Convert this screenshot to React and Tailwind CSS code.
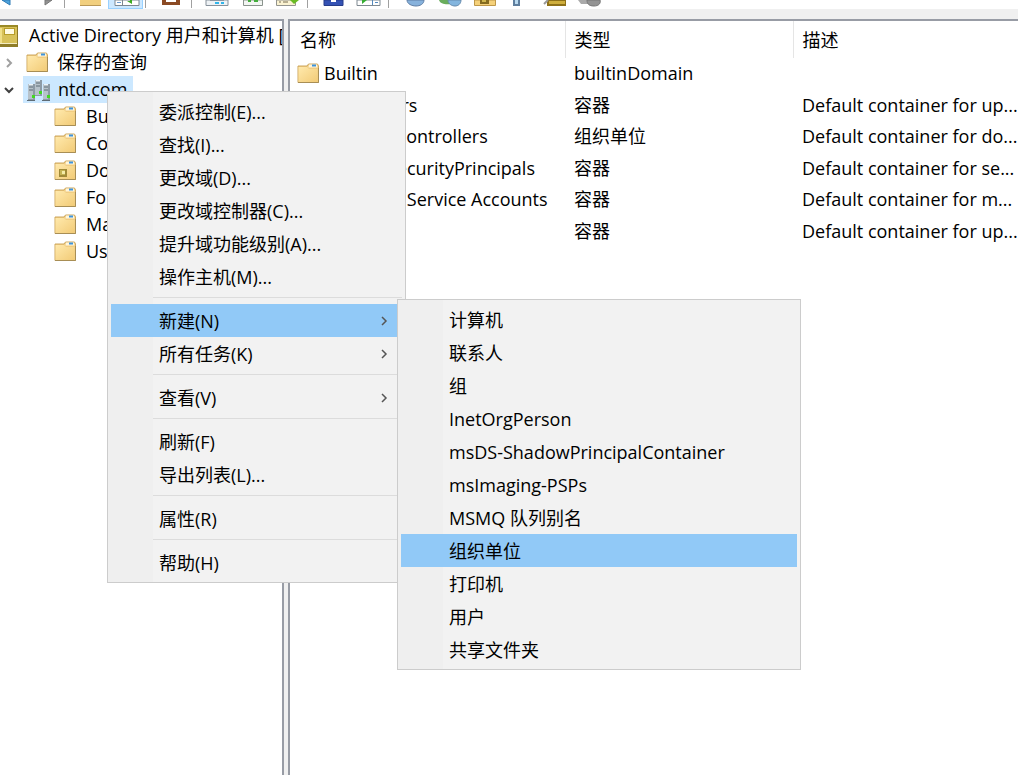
import clsx from 'clsx';

const TOOLBAR = [
  ['back', 'forward'],
  ['folder', 'tree'],
  ['clipboard'],
  ['properties', 'refresh', 'export'],
  ['help', 'console'],
  ['user', 'group', 'unit', 'filter', 'find', 'more'],
];

const CHILDREN = [
  { name: 'Builtin', type: 'builtinDomain', desc: '' },
  { name: 'Computers', type: '容器', desc: 'Default container for up...' },
  { name: 'Domain Controllers', type: '组织单位', desc: 'Default container for do...', unit: true },
  { name: 'ForeignSecurityPrincipals', type: '容器', desc: 'Default container for se...' },
  { name: 'Managed Service Accounts', type: '容器', desc: 'Default container for m...' },
  { name: 'Users', type: '容器', desc: 'Default container for up...' },
];

const NEW_ITEMS = [
  '计算机',
  '联系人',
  '组',
  'InetOrgPerson',
  'msDS-ShadowPrincipalContainer',
  'msImaging-PSPs',
  'MSMQ 队列别名',
  '组织单位',
  '打印机',
  '用户',
  '共享文件夹',
];

const MENU = [
  [
    { label: '委派控制(E)...' },
    { label: '查找(I)...' },
    { label: '更改域(D)...' },
    { label: '更改域控制器(C)...' },
    { label: '提升域功能级别(A)...' },
    { label: '操作主机(M)...' },
  ],
  [
    { label: '新建(N)', arrow: true, items: NEW_ITEMS },
    { label: '所有任务(K)', arrow: true },
  ],
  [{ label: '查看(V)', arrow: true }],
  [{ label: '刷新(F)' }, { label: '导出列表(L)...' }],
  [{ label: '属性(R)' }],
  [{ label: '帮助(H)' }],
];

function FolderIcon({ unit }) {
  return (
    <svg width="22" height="21" viewBox="0 0 22 21" className="shrink-0" aria-hidden="true">
      <defs>
        <linearGradient id="folder" x1="0" y1="0" x2="1" y2="1">
          <stop offset="0" stopColor="#ffe9ac" />
          <stop offset="1" stopColor="#f2cb77" />
        </linearGradient>
      </defs>
      <path d="M1 3h9l1.500-2h9l1 2v16.500H1z" fill="#f0cd83" stroke="#cda75e" />
      <path d="M12 1.500h8l.5 3h-9z" fill="#fff6dc" />
      <path d="M15 2.500h4" stroke="#3d93dc" strokeWidth="2" />
      <path d="M1.500 4H10l2 2h8.500v13h-19z" fill="url(#folder)" />
      <path d="M1 19.500h20.500V5" fill="none" stroke="#a88e55" />
      {unit && (
        <>
          <path d="M5 9h8v8H5z" fill="#a08a38" />
          <path d="M6 10h5v5H6z" fill="#c5b455" />
          <path d="M8 11h3v3H8z" fill="#f4eca8" />
        </>
      )}
    </svg>
  );
}

function BookIcon() {
  return (
    <svg width="19" height="24" viewBox="0 0 19 24" className="shrink-0" aria-hidden="true">
      <path d="M0 1h18v22H0z" fill="#d8c25a" />
      <path d="M0 1h18v2H0z" fill="#9a8926" />
      <path d="M0 20h18v3H0z" fill="#8f7d28" />
      <path d="M0 19h17v1H0z" fill="#f3ecc0" />
      <path d="M4 4h11v7H4z" fill="#b79d2a" />
      <path d="M5 5h9v5H5z" fill="#fffbe4" />
      <path d="M17 2h1v20h-1z" fill="#8c7826" />
      <path d="M0 4h2v15H0z" fill="#f0df86" />
    </svg>
  );
}

function Server({ x, y }) {
  return (
    <g transform={`translate(${x} ${y})`}>
      <path d="M0 0h7v16H0z" fill="#8d9aa5" />
      <path d="M0 0h5v15H0z" fill="#b7c2ca" />
      <path d="M1 3h4M1 6h4" stroke="#5c6a75" />
      <path d="M1 .5h4" stroke="#eef3f6" />
      <path d="M4 11h3v3H4z" fill="#43d822" />
    </g>
  );
}

function DomainIcon() {
  return (
    <svg width="24" height="24" viewBox="0 0 24 24" className="shrink-0" aria-hidden="true">
      <Server x={8} y={2} />
      <Server x={1} y={6} />
      <Server x={16} y={6} />
      <path d="M0 22.500h8M15 22.500h8" stroke="#5f6c75" />
    </svg>
  );
}

function Chevron({ className, width = 2 }) {
  return (
    <svg width="8" height="10" viewBox="0 0 8 10" className={className} aria-hidden="true">
      <path d="M2 1l4 4-4 4" fill="none" stroke="currentColor" strokeWidth={width} />
    </svg>
  );
}

function ToolIcon({ name }) {
  const art = {
    back: <path d="M10 0h8v5z" fill="#4ea3dc" stroke="#2d7ab5" />,
    forward: <path d="M18 0h7l-7 5z" fill="#929292" stroke="#777" />,
    folder: (
      <>
        <path d="M7 0h21v6H7z" fill="#f1cf7f" />
        <path d="M7 5.500h21" stroke="#b99857" />
      </>
    ),
    tree: (
      <>
        <path d="M6 0h24v5.500H6z" fill="#fff" stroke="#7d8791" />
        <path d="M13.500 0v5" stroke="#7d8791" />
        <path d="M8 2.500h4" stroke="#6c9bd0" />
        <path d="M18 1h3V0h2v4z" fill="#3cab22" />
      </>
    ),
    clipboard: (
      <>
        <path d="M8 0h18v5H8z" fill="#8b4a24" />
        <path d="M12 0h10v2H12z" fill="#fff" />
      </>
    ),
    properties: (
      <>
        <path d="M6 0h22v5.500H6z" fill="#eef2f5" stroke="#87919b" />
        <path d="M10 .5h14" stroke="#8c96a0" />
        <path d="M15 3h4M21 3h3" stroke="#31b6ec" strokeWidth="2" />
      </>
    ),
    refresh: (
      <>
        <path d="M8.500 0h19v5.500h-19z" fill="#f3f6f3" stroke="#8a938d" />
        <path d="M13 1h3M19 1h4" stroke="#43ad3b" strokeWidth="2" />
      </>
    ),
    export: (
      <>
        <path d="M6.500 0h19v5.500h-19z" fill="#fbf3d2" stroke="#93948e" />
        <path d="M9 2h2M13 2h5" stroke="#776c50" />
        <path d="M20 0h9l-5 4z" fill="#69bb23" />
      </>
    ),
    help: (
      <>
        <path d="M8 0h19v5.500H8z" fill="#3452b4" stroke="#263c8a" />
        <path d="M15 0h5v2h-5z" fill="#fff" />
      </>
    ),
    console: (
      <>
        <path d="M6 0h23v5.500H6z" fill="#fff" stroke="#7f8991" />
        <path d="M11 0h5l-5 4z" fill="#36ad32" />
        <path d="M21.500 0v5M24 2.500h3" stroke="#5489bd" />
      </>
    ),
    user: <path d="M10 0h17c0 4-4 6-8 6s-9-2-9-6z" fill="#87b2dc" stroke="#617fa5" />,
    group: (
      <>
        <path d="M7 0h12v4c-5 1-11 0-12-4z" fill="#69ad5c" />
        <path d="M16 0h13c0 4-3 6-6 6s-7-2-7-6z" fill="#83b5de" stroke="#668bad" />
      </>
    ),
    unit: (
      <>
        <path d="M7.500 0h21v5.500h-21z" fill="#f5d17a" stroke="#bf9849" />
        <path d="M13 0h9v4h-9z" fill="#866c20" />
        <path d="M15 0h4v2h-4z" fill="#d0b64f" />
      </>
    ),
    filter: (
      <>
        <path d="M11 0h7v6h-7z" fill="#5f7f9f" />
        <path d="M13 0h3v4h-3z" fill="#b9d9ef" />
      </>
    ),
    find: (
      <>
        <path d="M10 0h19v6H10z" fill="#8f7118" />
        <path d="M12 1h16v3H12z" fill="#cfae3c" />
        <path d="M7 4l4-4" stroke="#999" strokeWidth="2" />
      </>
    ),
    more: (
      <>
        <path d="M6 0h13v4H9z" fill="#aaa" />
        <path d="M15 0h13c1 3-1 6-6 6s-7-2-7-6z" fill="#949494" stroke="#777" />
      </>
    ),
  };
  return (
    <svg width="35" height="9" viewBox="0 0 35 9" aria-hidden="true">
      {art[name]}
    </svg>
  );
}

function Toolbar() {
  return (
    <div role="toolbar" className="-ml-2 flex h-[9px] bg-white">
      {TOOLBAR.map((group, i) => (
        <div key={group[0]} className="flex">
          {i > 0 && <div className="mr-2 ml-0.5 h-2 w-px bg-[#a0a0a0]" />}
          {group.map((name) => (
            <button
              key={name}
              aria-label={name}
              className={clsx('h-[9px] w-[35px]', name === 'tree' && 'border-x border-b border-[#99d1ff] bg-[#cce8ff]')}
            >
              <ToolIcon name={name} />
            </button>
          ))}
        </div>
      ))}
    </div>
  );
}

function Tree() {
  return (
    <nav className="w-[284px] shrink-0 overflow-hidden border-t-2 border-r-2 border-[#989ca5] bg-white pt-px whitespace-nowrap">
      <ul role="tree">
        <li role="treeitem" className="flex h-[27px] items-center gap-[10px]">
          <BookIcon />
          <span>Active Directory 用户和计算机 [</span>
        </li>
        <li role="treeitem" className="flex h-[27px] items-center">
          <Chevron className="ml-[5px] text-[#a0a0a0]" />
          <span className="ml-[13px] flex items-center gap-[9px]">
            <FolderIcon />
            保存的查询
          </span>
        </li>
        <li role="treeitem" aria-expanded="true">
          <div className="flex h-[27px] items-center">
            <Chevron className="ml-[5px] rotate-90 text-[#404040]" />
            <span className="ml-[10px] flex h-full items-center gap-[7px] bg-[#cce8ff] pr-[6px] pl-1">
              <DomainIcon />
              ntd.com
            </span>
          </div>
          <ul role="group">
            {CHILDREN.map((c) => (
              <li key={c.name} role="treeitem" className="flex h-[27px] items-center gap-[10px] pl-[54px]">
                <FolderIcon unit={c.unit} />
                <span>{c.name}</span>
              </li>
            ))}
          </ul>
        </li>
      </ul>
    </nav>
  );
}

function ObjectList() {
  return (
    <main className="min-w-0 flex-1 overflow-hidden border-t-2 border-l-2 border-[#989ca5] bg-white whitespace-nowrap">
      <table className="h-[226px] w-full table-fixed text-left">
        <thead>
          <tr className="h-[37px]">
            <th className="w-[275px] border-r border-[#e5e5e5] pt-0.5 pl-[10px] font-normal">名称</th>
            <th className="w-[228px] border-r border-[#e5e5e5] pt-0.5 pl-[9px] font-normal">类型</th>
            <th className="pt-0.5 pl-[9px] font-normal">描述</th>
          </tr>
        </thead>
        <tbody>
          {CHILDREN.map((c) => (
            <tr key={c.name}>
              <td className="pl-[7px]">
                <span className="flex items-center gap-[5px]">
                  <FolderIcon unit={c.unit} />
                  {c.name}
                </span>
              </td>
              <td className="pl-[9px]">{c.type}</td>
              <td className="pl-[9px]">{c.desc}</td>
            </tr>
          ))}
        </tbody>
      </table>
    </main>
  );
}

function MenuItem({ label, active, arrow }) {
  return (
    <button
      role="menuitem"
      className={clsx('flex h-[33px] w-full items-center justify-between pr-[14px] pl-12', active && 'bg-[#91c9f7]')}
    >
      <span className="pt-0.5">{label}</span>
      {arrow && <Chevron className="text-[#555]" width={1.5} />}
    </button>
  );
}

const menuBox =
  'absolute border border-[#ccc] bg-[linear-gradient(to_right,#efefef_45px,#f2f2f2_45px)] p-[3px] whitespace-nowrap';

function ContextMenu() {
  return (
    <div role="menu" className={clsx(menuBox, 'top-[91px] left-[107px] w-[299px]')}>
      {MENU.map((section, i) => (
        <div key={section[0].label}>
          {i > 0 && (
            <div className="h-[11px] pt-1 pl-[42px]">
              <div className="h-px w-full bg-[#dcdcdc]" />
            </div>
          )}
          {section.map((item) => (
            <div key={item.label} className="relative">
              <MenuItem label={item.label} arrow={item.arrow} active={!!item.items} />
              {item.items && (
                <div role="menu" className={clsx(menuBox, '-top-[5px] left-[286px] z-10 w-[404px]')}>
                  {item.items.map((name) => (
                    <MenuItem key={name} label={name} active={name === '组织单位'} />
                  ))}
                </div>
              )}
            </div>
          ))}
        </div>
      ))}
    </div>
  );
}

export default function App() {
  return (
    <div className="relative flex h-screen flex-col overflow-hidden bg-[#f0f0f0] font-['Open_Sans','Noto_Sans_CJK_SC',sans-serif] text-[18px] leading-[27px] text-black">
      <Toolbar />
      <div className="mt-[10px] flex min-h-0 flex-1 gap-1">
        <Tree />
        <ObjectList />
      </div>
      <ContextMenu />
    </div>
  );
}
